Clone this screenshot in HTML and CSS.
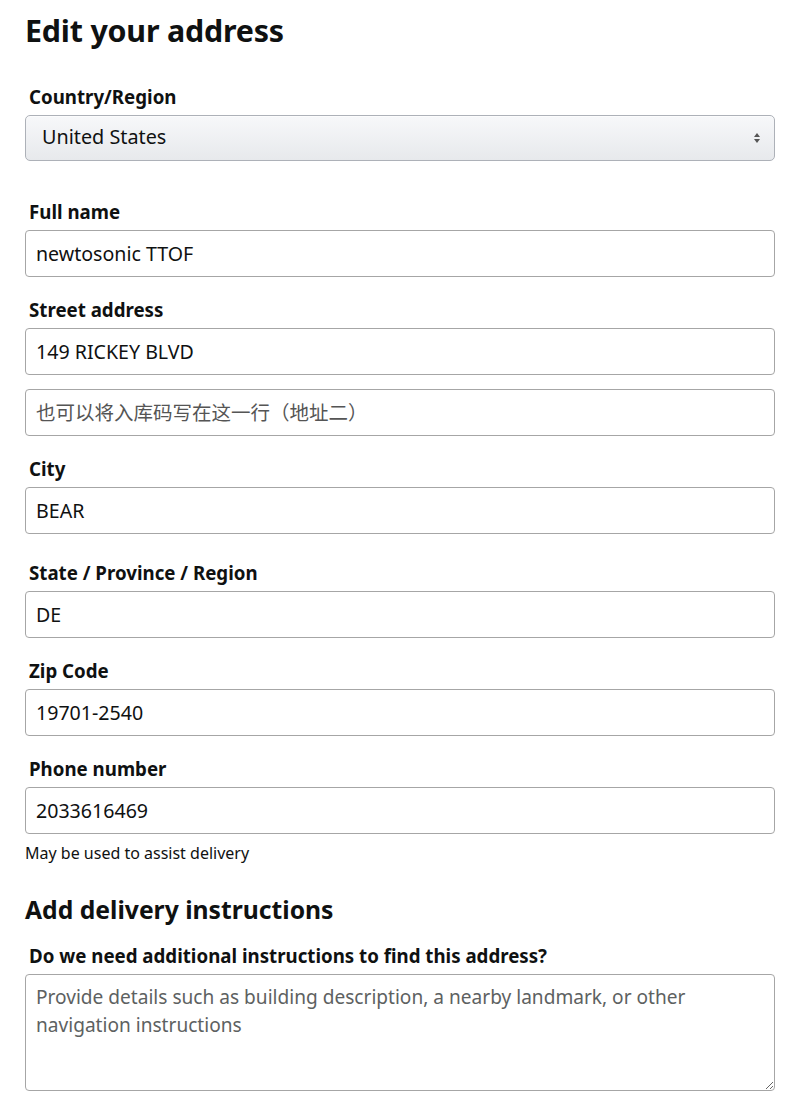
FILE: index.html
```html
<!DOCTYPE html>
<html>
<head>
<meta charset="utf-8">
<link rel="stylesheet" href="styles.css">
</head>
<body>
<div class="page">
  <h1 class="title">Edit your address</h1>

  <div class="field first">
    <label class="label">Country/Region</label>
    <div class="select">
      <span class="select-text">United States</span>
      <svg class="arrows" width="8" height="12" viewBox="0 0 8 12"><path d="M4 1 L7 5 H1 Z" fill="#555"/><path d="M4 11 L7 7 H1 Z" fill="#555"/></svg>
    </div>
  </div>

  <div class="field gap-lg">
    <label class="label">Full name</label>
    <input class="input" type="text" value="newtosonic TTOF">
  </div>

  <div class="field">
    <label class="label">Street address</label>
    <input class="input" type="text" value="149 RICKEY BLVD">
    <input class="input cjk second" type="text" value="" placeholder="也可以将入库码写在这一行（地址二）">
  </div>

  <div class="field">
    <label class="label">City</label>
    <input class="input" type="text" value="BEAR">
  </div>

  <div class="field gap-md">
    <label class="label">State / Province / Region</label>
    <input class="input" type="text" value="DE">
  </div>

  <div class="field">
    <label class="label">Zip Code</label>
    <input class="input" type="text" value="19701-2540">
  </div>

  <div class="field">
    <label class="label">Phone number</label>
    <input class="input" type="text" value="2033616469">
    <div class="hint">May be used to assist delivery</div>
  </div>

  <h2 class="subtitle">Add delivery instructions</h2>

  <div class="field tight">
    <label class="label">Do we need additional instructions to find this address?</label>
    <textarea class="textarea" placeholder="Provide details such as building description, a nearby landmark, or other navigation instructions"></textarea>
  </div>
</div>
</body>
</html>
```

FILE: styles.css
```css
html, body {
  margin: 0;
  padding: 0;
  background: #ffffff;
}
body {
  font-family: "Noto Sans", "Open Sans", sans-serif;
  color: #0f1111;
}
.page {
  width: 750px;
  padding: 0 0 0 25px;
}
.title {
  margin: 0;
  padding-top: 12px;
  font-size: 30.4px;
  font-weight: 700;
  line-height: 38px;
  letter-spacing: -0.2px;
}
.field {
  display: flex;
  flex-direction: column;
  margin-top: 21px;
}
.field.first {
  margin-top: 35px;
}
.field.gap-lg {
  margin-top: 39px;
}
.field.gap-md {
  margin-top: 27px;
}
.field.tight {
  margin-top: 18px;
}
.label {
  font-size: 18.7px;
  font-weight: 700;
  line-height: 24px;
  padding-left: 4px;
  margin-bottom: 6px;
}
.select {
  box-sizing: border-box;
  height: 46px;
  border: 1px solid #adb1b8;
  border-radius: 5px;
  background: linear-gradient(to bottom, #f7f8fa, #e7e9ec);
  box-shadow: 0 1px 0 rgba(255,255,255,0.6) inset;
  display: flex;
  align-items: center;
  justify-content: space-between;
  padding: 0 13px 3px 16px;
}
.arrows {
  margin-top: 3px;
}
.select-text {
  font-size: 19.8px;
}
.input {
  box-sizing: border-box;
  width: 750px;
  height: 47px;
  border: 1px solid #a6a6a6;
  border-radius: 4px;
  padding: 0 11px 0 10px;
  font-family: "Noto Sans", "Open Sans", sans-serif;
  font-size: 19.6px;
  color: #0f1111;
  background: #fff;
  outline: none;
}
.input.second {
  margin-top: 14px;
}
.input.cjk::placeholder {
  font-family: "Noto Sans CJK SC", sans-serif;
  color: #555;
  font-size: 19.5px;
}
.hint {
  font-size: 16px;
  line-height: 22px;
  margin-top: 8px;
}
.subtitle {
  margin: 30px 0 0 0;
  font-size: 24.7px;
  font-weight: 700;
  line-height: 32px;
}
.textarea {
  box-sizing: border-box;
  width: 750px;
  height: 117px;
  border: 1px solid #a6a6a6;
  border-radius: 4px;
  padding: 8px 11px 8px 10px;
  font-family: "Noto Sans", "Open Sans", sans-serif;
  font-size: 19.1px;
  line-height: 28px;
  color: #0f1111;
  resize: both;
  outline: none;
}
.textarea::placeholder {
  color: #5d6161;
}
```
